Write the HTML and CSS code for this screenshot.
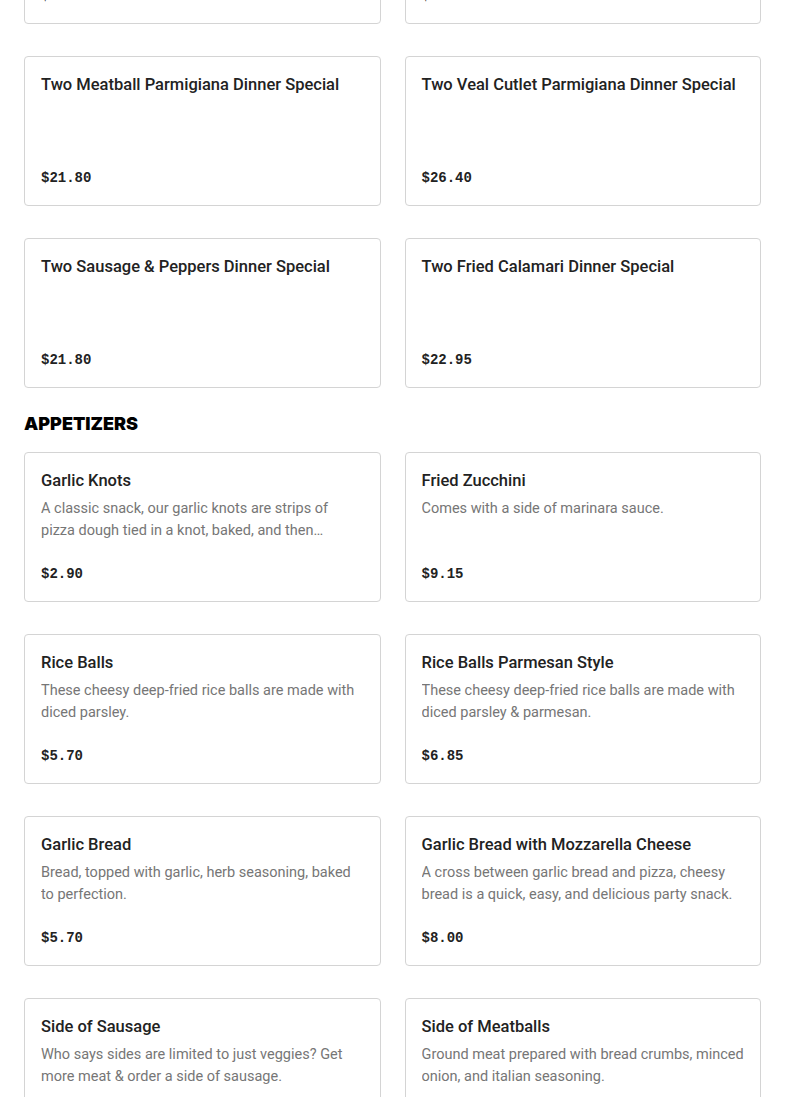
FILE: index.html
```html
<!DOCTYPE html>
<html lang="en">
<head>
    <meta charset="UTF-8">
    <meta name="viewport" content="width=device-width, initial-scale=1.0">
    <title>Menu</title>
    <link rel="stylesheet" href="styles.css">
</head>
<body>
    <div class="menu">
        <section class="category">
            <div class="grid">
                <div class="card">
                    <h3 class="item-name">Two Chicken Parmigiana Dinner Special</h3>
                    <p class="item-desc"></p>
                    <span class="price">$22.40</span>
                </div>
                <div class="card">
                    <h3 class="item-name">Two Eggplant Parmigiana Dinner Special</h3>
                    <p class="item-desc"></p>
                    <span class="price">$21.80</span>
                </div>
                <div class="card">
                    <h3 class="item-name">Two Meatball Parmigiana Dinner Special</h3>
                    <p class="item-desc"></p>
                    <span class="price">$21.80</span>
                </div>
                <div class="card">
                    <h3 class="item-name">Two Veal Cutlet Parmigiana Dinner Special</h3>
                    <p class="item-desc"></p>
                    <span class="price">$26.40</span>
                </div>
                <div class="card">
                    <h3 class="item-name">Two Sausage &amp; Peppers Dinner Special</h3>
                    <p class="item-desc"></p>
                    <span class="price">$21.80</span>
                </div>
                <div class="card">
                    <h3 class="item-name">Two Fried Calamari Dinner Special</h3>
                    <p class="item-desc"></p>
                    <span class="price">$22.95</span>
                </div>
            </div>
        </section>

        <section class="category">
            <h2 class="category-title">APPETIZERS</h2>
            <div class="grid">
                <div class="card">
                    <h3 class="item-name">Garlic Knots</h3>
                    <p class="item-desc">A classic snack, our garlic knots are strips of pizza dough tied in a knot, baked, and then brushed with garlic butter.</p>
                    <span class="price">$2.90</span>
                </div>
                <div class="card">
                    <h3 class="item-name">Fried Zucchini</h3>
                    <p class="item-desc">Comes with a side of marinara sauce.</p>
                    <span class="price">$9.15</span>
                </div>
                <div class="card">
                    <h3 class="item-name">Rice Balls</h3>
                    <p class="item-desc">These cheesy deep-fried rice balls are made with diced parsley.</p>
                    <span class="price">$5.70</span>
                </div>
                <div class="card">
                    <h3 class="item-name">Rice Balls Parmesan Style</h3>
                    <p class="item-desc">These cheesy deep-fried rice balls are made with diced parsley &amp; parmesan.</p>
                    <span class="price">$6.85</span>
                </div>
                <div class="card">
                    <h3 class="item-name">Garlic Bread</h3>
                    <p class="item-desc">Bread, topped with garlic, herb seasoning, baked to perfection.</p>
                    <span class="price">$5.70</span>
                </div>
                <div class="card">
                    <h3 class="item-name">Garlic Bread with Mozzarella Cheese</h3>
                    <p class="item-desc">A cross between garlic bread and pizza, cheesy bread is a quick, easy, and delicious party snack.</p>
                    <span class="price">$8.00</span>
                </div>
                <div class="card">
                    <h3 class="item-name">Side of Sausage</h3>
                    <p class="item-desc">Who says sides are limited to just veggies? Get more meat &amp; order a side of sausage.</p>
                    <span class="price">$5.70</span>
                </div>
                <div class="card">
                    <h3 class="item-name">Side of Meatballs</h3>
                    <p class="item-desc">Ground meat prepared with bread crumbs, minced onion, and italian seasoning.</p>
                    <span class="price">$5.70</span>
                </div>
            </div>
        </section>
    </div>
</body>
</html>
```

FILE: styles.css
```css
body {
    margin: 0;
    padding: 0;
    background: #fff;
    font-family: "Roboto", "Liberation Sans", Arial, sans-serif;
    color: #222;
}

/* page is shown scrolled part way down the menu */
.menu {
    padding: 0 24px;
    margin-top: -126px;
}

.category-title {
    margin: 26px 0 18px;
    font-family: "Inter", "Liberation Sans", Arial, sans-serif;
    font-size: 18px;
    line-height: 20px;
    font-weight: 900;
    color: #000;
}

.grid {
    display: grid;
    grid-template-columns: 1fr 1fr;
    column-gap: 24px;
    row-gap: 32px;
}

.card {
    display: flex;
    flex-direction: column;
    height: 150px;
    box-sizing: border-box;
    padding: 16px 16px 17px;
    border: 1px solid #d4d4d4;
    border-radius: 4px;
    background: #fff;
}

.item-name {
    margin: 0;
    font-size: 16.5px;
    line-height: 24px;
    font-weight: 500;
    color: #222;
}

.item-desc {
    margin: 5px 0 0;
    font-size: 14.5px;
    line-height: 22px;
    color: #767676;
    display: -webkit-box;
    -webkit-line-clamp: 2;
    -webkit-box-orient: vertical;
    overflow: hidden;
}

.price {
    margin-top: auto;
    font-family: "Liberation Mono", "DejaVu Sans Mono", monospace;
    font-size: 14px;
    line-height: 20px;
    font-weight: 700;
    color: #222;
}
```
